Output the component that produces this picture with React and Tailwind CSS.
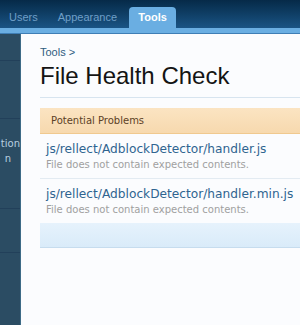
export default function App() {
  const font = { fontFamily: '"DejaVu Sans", Verdana, sans-serif' };
  const lib = { fontFamily: '"Liberation Sans", Arial, sans-serif' };
  return (
    <div className="w-[300px] h-[325px] overflow-hidden bg-white flex flex-col" style={font}>
      <div className="h-[28px] bg-gradient-to-b from-[#062a48] to-[#1a5485] flex items-end pl-[9px] shrink-0" style={lib}>
        <div className="text-[11px] text-[#6f9fc8] h-[21px] flex items-center">Users</div>
        <div className="text-[11px] text-[#6f9fc8] h-[21px] flex items-center ml-[20px]">Appearance</div>
        <div className="ml-[12px] w-[47px] h-[21px] bg-[#6aaee2] rounded-t-[4px] flex items-center justify-center text-[11px] font-bold text-white">Tools</div>
      </div>
      <div className="h-[5px] bg-[#6aaee2] shrink-0" />
      <div className="h-[1px] bg-[#3f7eb5] shrink-0" />
      <div className="flex flex-1">
        <div className="w-[21px] bg-[#2b4c63] border-r border-[#3d6a86] flex flex-col text-[10px] text-[#b8cfe0] overflow-hidden">
          <div className="h-[27px] border-b border-[#22405a]" />
          <div className="h-[58px] border-b border-[#22405a]" />
          <div className="h-[90px] border-b border-[#22405a] relative">
            <div className="absolute right-0 top-[17px] leading-[15px] text-right whitespace-nowrap">tion<br /><span className="pr-[9px]">n</span></div>
          </div>
          <div className="h-[44px] border-b border-[#22405a]" />
        </div>
        <div className="flex-1 bg-[#fbfcfe] pl-[19px] pt-[12px]">
          <div className="text-[11px] text-[#2f5c80] leading-[13px]" style={lib}>Tools &gt;</div>
          <div className="text-[24px] text-[#141414] mt-[2px] leading-[30px] pb-[6px] border-b border-[#d7e4ef]" style={lib}>File Health Check</div>
          <div className="mt-[10px] h-[26px] bg-gradient-to-b from-[#fbe4c2] to-[#f7d9ae] border-b border-[#f0c98f] flex items-center pl-[11px] text-[10px] text-[#5c4126]">Potential Problems</div>
          <div className="pl-[6px] pt-[7px] pb-[5px] border-b border-[#e3ebf2]">
            <div className="text-[12.2px] text-[#2f6490] leading-[16px]">js/rellect/AdblockDetector/handler.js</div>
            <div className="text-[10px] text-[#a0a0a0] leading-[16px]">File does not contain expected contents.</div>
          </div>
          <div className="pl-[6px] pt-[7px] pb-[5px]">
            <div className="text-[12.2px] text-[#2f6490] leading-[16px]">js/rellect/AdblockDetector/handler.min.js</div>
            <div className="text-[10px] text-[#a0a0a0] leading-[16px]">File does not contain expected contents.</div>
          </div>
          <div className="h-[25px] bg-gradient-to-b from-[#e6f2fc] to-[#d9ebf9] border-b border-[#c6dcee]" />
        </div>
      </div>
    </div>
  );
}
